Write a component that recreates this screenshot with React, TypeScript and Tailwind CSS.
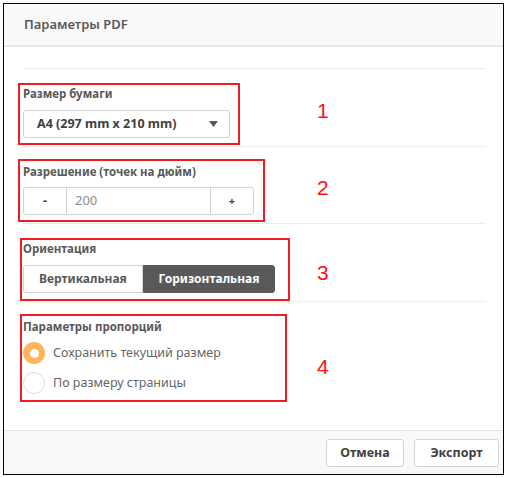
import React from "react";

const font = { fontFamily: '"Noto Sans", "Open Sans", sans-serif' };

const Separator = ({ className = "" }: { className?: string }) => (
  <div className={`ml-[5px] h-px w-[463px] bg-[#ececec] ${className}`} />
);

const Marker = ({ n, top }: { n: string; top: string }) => (
  <div
    className={`text-[21px] leading-[26px] text-[#ff1010] ${top}`}
    style={{ fontFamily: '"Liberation Sans", Arial, sans-serif' }}
  >
    {n}
  </div>
);

const Label = ({ text, className = "" }: { text: string; className?: string }) => (
  <div className={`h-[16px] text-[11.5px] leading-[16px] font-bold text-[#595959] ${className}`}>
    {text}
  </div>
);

export default function App() {
  const [orient, setOrient] = React.useState("h");
  const [keep, setKeep] = React.useState(true);
  const [dpi, setDpi] = React.useState(200);

  return (
    <div className="w-[510px] h-[478px] bg-white pl-[3px] pt-[3px]" style={font}>
      <div className="flex h-[472px] w-[501px] flex-col border border-black bg-white">
        {/* header */}
        <div className="flex h-[43px] shrink-0 items-center border-b-2 border-[#e6e6e6] bg-[#fafafa] pl-[20px]">
          <span className="text-[13px] font-semibold text-[#595959]">Параметры PDF</span>
        </div>

        {/* body */}
        <div className="flex flex-1 flex-col pl-[14px] pt-[21px]">
          <Separator />

          <div className="mt-[14px] flex items-start">
            <div className="w-[299px]">
              <div className="h-[62px] w-[222px] border-2 border-[#ee1c25] pl-[3px] pt-[1px]">
                <Label text="Размер бумаги" />
                <button className="mt-[8px] flex h-[28px] w-[207px] items-center justify-between rounded-[3px] border border-[#d3d3d3] bg-white pl-[13px] pr-[11px] text-[12.5px] font-bold text-[#404040]">
                  <span>A4 (297 mm x 210 mm)</span>
                  <svg width="9" height="6" viewBox="0 0 9 6">
                    <path d="M0 0 L9 0 L4.5 6 Z" fill="#595959" />
                  </svg>
                </button>
              </div>
            </div>
            <Marker n="1" top="mt-[15px]" />
          </div>

          <Separator className="mt-[1px]" />

          <div className="mt-[12px] flex items-start">
            <div className="w-[299px]">
              <div className="h-[63px] w-[247px] border-2 border-[#ee1c25] pl-[3px] pt-[3px]">
                <Label text="Разрешение (точек на дюйм)" />
                <div className="mt-[7px] flex h-[28px] w-[231px] rounded-[3px] border border-[#d3d3d3] bg-white">
                  <button
                    onClick={() => setDpi(dpi - 1)}
                    className="flex w-[43px] items-center justify-center border-r border-[#d3d3d3] text-[13px] font-bold text-[#404040]"
                  >
                    -
                  </button>
                  <div className="flex flex-1 items-center pl-[8px] text-[13px] text-[#8c8c8c]">{dpi}</div>
                  <button
                    onClick={() => setDpi(dpi + 1)}
                    className="flex w-[43px] items-center justify-center border-l border-[#d3d3d3] text-[11px] font-bold text-[#404040]"
                  >
                    +
                  </button>
                </div>
              </div>
            </div>
            <Marker n="2" top="mt-[16px]" />
          </div>

          <Separator className="mt-[1px]" />

          <div className="mt-[14px] flex items-start">
            <div className="w-[299px]">
              <div className="ml-[2px] h-[63px] w-[270px] border-2 border-[#ee1c25] pl-[1px] pt-[1px]">
                <Label text="Ориентация" />
                <div className="mt-[8px] flex h-[28px] w-[252px] text-[12px] font-bold">
                  <button
                    onClick={() => setOrient("v")}
                    className={`w-[120px] rounded-l-[3px] border ${
                      orient === "v" ? "border-[#595959] bg-[#595959] text-white" : "border-[#d3d3d3] bg-white text-[#595959]"
                    }`}
                  >
                    Вертикальная
                  </button>
                  <button
                    onClick={() => setOrient("h")}
                    className={`flex-1 rounded-r-[3px] border ${
                      orient === "h" ? "border-[#595959] bg-[#595959] text-white" : "border-[#d3d3d3] bg-white text-[#595959]"
                    }`}
                  >
                    Горизонтальная
                  </button>
                </div>
              </div>
            </div>
            <Marker n="3" top="mt-[22px]" />
          </div>

          <Separator />

          <div className="mt-[12px] flex items-start">
            <div className="w-[299px]">
              <div className="ml-[2px] h-[88px] w-[267px] border-2 border-[#ee1c25] pl-[1px] pt-[3px]">
                <Label text="Параметры пропорций" />
                <label className="mt-[7px] flex h-[22px] cursor-pointer items-center gap-[8px]" onClick={() => setKeep(true)}>
                  <Radio on={keep} />
                  <span className="text-[12.5px] text-[#666666]">Сохранить текущий размер</span>
                </label>
                <label className="mt-[8px] flex h-[22px] cursor-pointer items-center gap-[8px]" onClick={() => setKeep(false)}>
                  <Radio on={!keep} />
                  <span className="text-[12.5px] text-[#666666]">По размеру страницы</span>
                </label>
              </div>
            </div>
            <Marker n="4" top="mt-[40px]" />
          </div>
        </div>

        {/* footer */}
        <div className="flex h-[44px] shrink-0 items-start justify-end gap-[10px] border-t border-[#e3e3e3] bg-[#f9f9f9] pr-[4px] pt-[8px]">
          <button className="h-[28px] w-[78px] rounded-[3px] border border-[#d3d3d3] bg-white text-[12.5px] font-bold text-[#404040]">
            Отмена
          </button>
          <button className="h-[28px] w-[85px] rounded-[3px] border border-[#d3d3d3] bg-white text-[12.5px] font-bold text-[#404040]">
            Экспорт
          </button>
        </div>
      </div>
    </div>
  );
}

function Radio({ on }: { on: boolean }) {
  return on ? (
    <span className="flex h-[22px] w-[22px] items-center justify-center rounded-full bg-[#ffb55c]">
      <span className="h-[9px] w-[9px] rounded-full bg-white" />
    </span>
  ) : (
    <span className="h-[22px] w-[22px] rounded-full border border-[#dcdcdc] bg-white" />
  );
}
